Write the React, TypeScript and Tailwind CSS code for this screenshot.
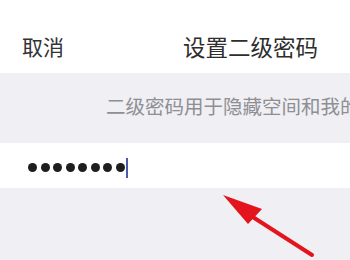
export default function App() {
  return (
    <div
      className="relative w-[350px] h-[260px] overflow-hidden bg-[#efeff4]"
      style={{ fontFamily: '"Noto Sans CJK SC", "Noto Sans", sans-serif' }}
    >
      {/* nav bar */}
      <div className="h-[73px] bg-white flex items-end pb-[15px]">
        <div className="flex w-full items-center">
          <span className="pl-[22px] text-[21px] leading-[24px] text-[#333]">取消</span>
          <span className="ml-[119px] text-[22.5px] leading-[24px] text-[#2e2e2e] whitespace-nowrap">
            设置二级密码
          </span>
        </div>
      </div>

      {/* hint */}
      <div className="h-[70px] flex items-center pl-[106px] whitespace-nowrap">
        <span className="text-[19.5px] leading-[22px] text-[#8e8e93] -mt-[4px]">
          二级密码用于隐藏空间和我的
        </span>
      </div>

      {/* input */}
      <div className="h-[45px] bg-white flex items-center pl-[28px]">
        <div className="flex items-center gap-[3.5px] mt-[4px]">
          {[0, 1, 2, 3, 4, 5, 6, 7].map((i) => (
            <span key={i} className="w-[9px] h-[9px] rounded-full bg-[#1e1e1e]" />
          ))}
          <span className="w-[2px] h-[20px] bg-[#4a5bab] -ml-[2px]" />
        </div>
      </div>

      {/* annotation arrow */}
      <svg className="absolute left-0 top-0" width="350" height="260" viewBox="0 0 350 260">
        <line x1="245" y1="212" x2="312" y2="255" stroke="#e3141b" strokeWidth="4" strokeLinecap="round" />
        <polygon points="223,195 262,209 248,224" fill="#e3141b" />
      </svg>
    </div>
  );
}
